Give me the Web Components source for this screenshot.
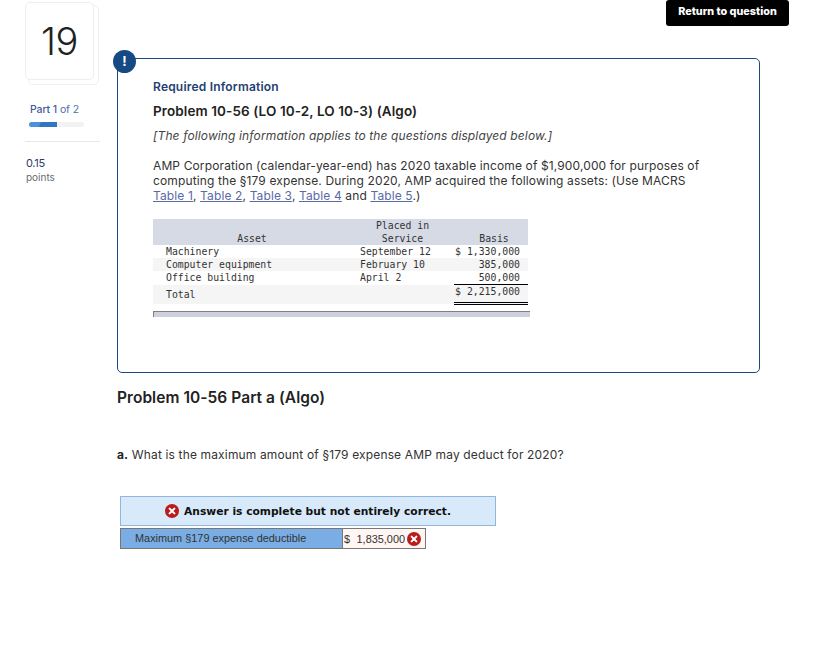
<!DOCTYPE html>
<html>
<head>
<meta charset="utf-8">
<title>Problem 10-56</title>
<style>
  body { margin: 0; background: #fff; font-family: "Inter", "Noto Sans", sans-serif; color: #333; }
  a { color: #5a6aa6; text-decoration: underline; }
</style>
</head>
<body>
<quiz-page>
  <question-sidebar slot="side" number="19" part="1" parts="2" points="0.15"></question-sidebar>
  <info-panel>
    <span slot="label">Required Information</span>
    <span slot="title">Problem 10-56 (LO 10-2, LO 10-3) (Algo)</span>
    <span slot="note">[The following information applies to the questions displayed below.]</span>
    <span slot="body">AMP Corporation (calendar-year-end) has 2020 taxable income of $1,900,000 for purposes of computing the §179 expense. During 2020, AMP acquired the following assets: (Use MACRS <a href="#">Table 1</a>, <a href="#">Table 2</a>, <a href="#">Table 3</a>, <a href="#">Table 4</a> and <a href="#">Table 5</a>.)</span>
    <asset-table slot="table"></asset-table>
  </info-panel>
  <part-question></part-question>
</quiz-page>

<script>
class QuizPage extends HTMLElement {
  constructor() {
    super();
    this.attachShadow({ mode: "open" });
    this.shadowRoot.innerHTML = `<style>
      :host { display: block; width: 823px; height: 667px; overflow: hidden; }
      .top { display: flex; justify-content: flex-end; padding-right: 34px; height: 58px; }
      .top button {
        width: 123px; height: 26px; margin: 0; padding: 0 0 3px; border: 0; border-radius: 3px;
        background: #000; color: #fff; font: 800 10.8px "Inter", sans-serif;
      }
      .cols { display: grid; grid-template-columns: 117px 643px; margin-top: -58px; }
      .main { padding-top: 58px; }
    </style>
    <div class="top"><button>Return to question</button></div>
    <div class="cols">
      <div><slot name="side"></slot></div>
      <div class="main"><slot></slot></div>
    </div>`;
  }
}

class QuestionSidebar extends HTMLElement {
  constructor() {
    super();
    this.attachShadow({ mode: "open" });
    let number = this.getAttribute("number");
    let part = this.getAttribute("part");
    let parts = this.getAttribute("parts");
    let points = this.getAttribute("points");
    this.shadowRoot.innerHTML = `<style>
      :host { display: block; padding: 2px 0 0 25px; }
      .num {
        position: relative; box-sizing: border-box; width: 69px; height: 78px;
        border: 1px solid #eee; border-radius: 5px; background: #fff;
        display: flex; align-items: center; justify-content: center;
        font-size: 38px; font-weight: 300; letter-spacing: -.5px; color: #222;
      }
      .num::before {
        content: ""; position: absolute; z-index: -1; left: 2px; top: 2px; width: 69px; height: 78px;
        border: 1px solid #f0f0f0; border-radius: 5px;
      }
      .part { margin: 23px 0 0 5px; font-size: 10.5px; line-height: 13px; color: #4f6fae; letter-spacing: -.1px; }
      .part b { font-weight: 500; color: #3f5c9c; }
      .bar { width: 55px; height: 5px; margin: 6px 0 0 4px; border-radius: 3px; background: #f2f2f2; overflow: hidden; }
      .bar i { display: block; width: 28px; height: 5px; background: linear-gradient(115deg, #4a93dc 0 38%, #2f78c0 42%); }
      hr { width: 75px; margin: 14px 0 0; border: 0; border-top: 1px solid #e8e8e8; }
      .pts { margin: 15px 0 0 1px; font-size: 11px; line-height: 13px; color: #2c3e66; letter-spacing: -.3px; }
      .lbl { margin: 1px 0 0 1px; font-size: 10px; line-height: 13px; color: #6b6b78; }
    </style>
    <div class="num">${number}</div>
    <div class="part"><b>Part ${part}</b> of ${parts}</div>
    <div class="bar"><i></i></div>
    <hr>
    <div class="pts">${points}</div>
    <div class="lbl">points</div>`;
  }
}

class InfoPanel extends HTMLElement {
  constructor() {
    super();
    this.attachShadow({ mode: "open" });
    this.shadowRoot.innerHTML = `<style>
      :host {
        display: block; position: relative; box-sizing: border-box; height: 315px;
        border: 1px solid #1b4a82; border-radius: 5px; padding: 21px 35px 0;
        font-size: 12px; letter-spacing: .125px; color: #333;
      }
      .badge {
        position: absolute; left: -5px; top: -9px; width: 23px; height: 23px; border-radius: 50%;
        background: #164a84; color: #fff; font: 700 13px/22px "Inter", sans-serif; text-align: center;
      }
      .label { font-size: 12px; font-weight: 600; letter-spacing: .2px; line-height: 14px; color: #24406f; }
      .title { margin-top: 9px; font-size: 13.5px; font-weight: 600; letter-spacing: .1px; line-height: 16px; color: #222; }
      .note { margin-top: 9px; font-style: italic; line-height: 15px; color: #444; }
      .body { margin-top: 15px; line-height: 15px; width: 552px; }
      .table { margin-top: 16px; }
    </style>
    <div class="badge">!</div>
    <div class="label"><slot name="label"></slot></div>
    <div class="title"><slot name="title"></slot></div>
    <div class="note"><slot name="note"></slot></div>
    <div class="body"><slot name="body"></slot></div>
    <div class="table"><slot name="table"></slot></div>`;
  }
}

class AssetTable extends HTMLElement {
  constructor() {
    super();
    this.attachShadow({ mode: "open" });
    this.shadowRoot.innerHTML = `<style>
      :host { display: block; width: 377px; font: 9.8px/13px "DejaVu Sans Mono", "Liberation Mono", monospace; letter-spacing: 0; color: #333; }
      table { width: 375px; border-collapse: collapse; table-layout: fixed; white-space: nowrap; }
      th { background: #d6dae5; font-weight: 400; text-align: center; vertical-align: bottom; padding: 0; }
      td { padding: 0; height: 13px; }
      td:first-child { padding-left: 13px; }
      td:nth-child(2) { padding-left: 9px; }
      td:nth-child(3) { text-align: right; padding-right: 8px; }
      .alt td { background: #f5f5f5; }
      .rule td:nth-child(3) { border-bottom: 1px solid #000; }
      .total td { height: 17px; background: #f5f5f5; }
      .total td:nth-child(3) { border-bottom: 3px double #000; vertical-align: top; }
      .foot { margin-top: 6px; height: 5px; background: #cdd1de; border-top: 1px solid #808080; border-left: 1px solid #808080; }
    </style>
    <table>
      <colgroup><col style="width:198px"><col style="width:103px"><col style="width:74px"></colgroup>
      <tr><th>Asset</th><th>Placed in<br>Service</th><th style="padding-left:6px">Basis</th></tr>
      <tr><td>Machinery</td><td>September 12</td><td>$ 1,330,000</td></tr>
      <tr class="alt"><td>Computer equipment</td><td>February 10</td><td>385,000</td></tr>
      <tr class="rule"><td>Office building</td><td>April 2</td><td>500,000</td></tr>
      <tr class="total"><td>Total</td><td></td><td>$ 2,215,000</td></tr>
    </table>
    <div class="foot"></div>`;
  }
}

class ErrorIcon extends HTMLElement {
  constructor() {
    super();
    this.attachShadow({ mode: "open" });
    this.shadowRoot.innerHTML = `<style>
      :host { display: inline-block; width: 14px; height: 14px; flex: none; }
      svg { display: block; }
    </style>
    <svg width="14" height="14" viewBox="0 0 14 14">
      <circle cx="7" cy="7" r="7" fill="#b81c1c"/>
      <path d="M4.6 4.6l4.8 4.8M9.4 4.6l-4.8 4.8" stroke="#fff" stroke-width="2" stroke-linecap="round"/>
    </svg>`;
  }
}

class PartQuestion extends HTMLElement {
  constructor() {
    super();
    this.attachShadow({ mode: "open" });
    this.shadowRoot.innerHTML = `<style>
      :host { display: block; color: #333; }
      h2 { margin: 16px 0 0; font-size: 15.5px; font-weight: 600; letter-spacing: .05px; line-height: 18px; color: #222; }
      p { margin: 40px 0 0; font-size: 12px; letter-spacing: .15px; line-height: 15px; }
      p b { color: #222; }
      .banner {
        box-sizing: border-box; width: 376px; height: 30px; margin: 34px 0 0 3px;
        display: flex; align-items: center; justify-content: center; gap: 5px;
        background: #d8eafa; border: 1px solid #8fb6e0;
        font: 700 10.7px "DejaVu Sans", sans-serif; color: #111;
      }
      .row {
        box-sizing: border-box; width: 306px; height: 21px; margin: 2px 0 0 3px;
        display: flex; border: 1px solid #777;
        font: 10.9px "Liberation Sans", sans-serif; color: #333;
      }
      .row .name { width: 221px; padding-left: 14px; box-sizing: border-box; line-height: 19px; background: #7aade4; }
      .row .val {
        flex: 1; display: flex; align-items: center; gap: 2px; padding-left: 1px;
        background: #fff5f2; border-left: 1px solid #777;
      }
      .row .amt { display: flex; justify-content: space-between; width: 61px; }
    </style>
    <h2>Problem 10-56 Part a (Algo)</h2>
    <p><b>a.</b> What is the maximum amount of §179 expense AMP may deduct for 2020?</p>
    <div class="banner"><error-icon></error-icon><span>Answer is complete but not entirely correct.</span></div>
    <div class="row">
      <div class="name">Maximum §179 expense deductible</div>
      <div class="val"><span class="amt"><span>$</span><span>1,835,000</span></span><error-icon></error-icon></div>
    </div>`;
  }
}

customElements.define("quiz-page", QuizPage);
customElements.define("question-sidebar", QuestionSidebar);
customElements.define("info-panel", InfoPanel);
customElements.define("asset-table", AssetTable);
customElements.define("error-icon", ErrorIcon);
customElements.define("part-question", PartQuestion);
</script>
</body>
</html>
